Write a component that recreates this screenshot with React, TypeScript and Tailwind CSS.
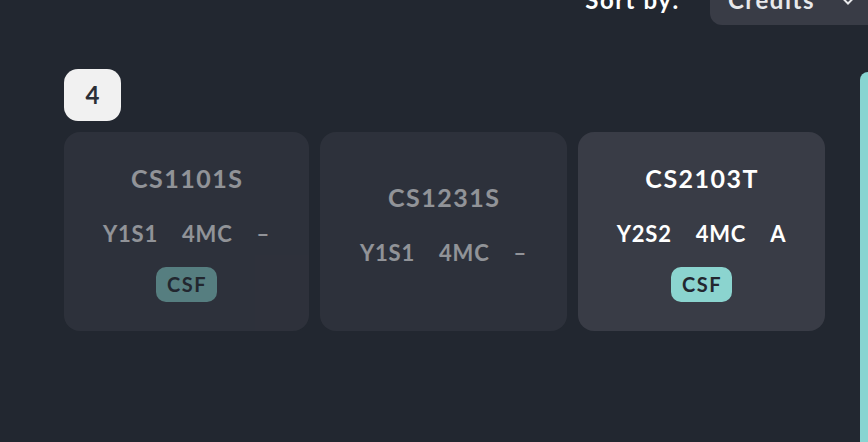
import React from 'react';

type Course = {
    code: string;
    sem: string;
    mc: string;
    grade: string;
    tag?: string;
    active?: boolean;
};

const COURSES: Course[] = [
    { code: 'CS1101S', sem: 'Y1S1', mc: '4MC', grade: '–', tag: 'CSF' },
    { code: 'CS1231S', sem: 'Y1S1', mc: '4MC', grade: '–' },
    { code: 'CS2103T', sem: 'Y2S2', mc: '4MC', grade: 'A', tag: 'CSF', active: true },
];

function CourseCard({ course, width }: { course: Course; width: string }) {
    return (
        <div
            className={`flex h-[199px] ${width} flex-col items-center justify-center rounded-[16px] bg-[#393c46] ${
                course.active ? '' : 'opacity-50'
            } ${course.tag ? '' : 'pb-[15px]'}`}
        >
            <div className="pl-[1.5px] text-[25px] font-bold leading-[32px] tracking-[1.5px] text-white">
                {course.code}
            </div>
            <div className="mt-[26px] flex gap-[24px] text-[22px] font-bold leading-[28px] tracking-[0.8px] text-white">
                <span>{course.sem}</span>
                <span>{course.mc}</span>
                <span>{course.grade}</span>
            </div>
            {course.tag && (
                <span className="mt-[19px] flex h-[35px] items-center rounded-[10px] bg-[#8bd4cf] pl-[11px] pr-[10px] text-[20px] font-bold tracking-[1.5px] text-[#22272f]">
                    {course.tag}
                </span>
            )}
        </div>
    );
}

export default function App() {
    return (
        <div
            className="flex h-[442px] w-[868px] flex-col overflow-hidden bg-[#222730]"
            style={{ fontFamily: 'Lato, "Liberation Sans", sans-serif' }}
        >
            <div className="-mt-[25px] flex h-[50px] items-center justify-end gap-[30px]">
                <span className="text-[24px] font-bold tracking-[1.5px] text-white">Sort by:</span>
                <div className="-mr-[12px] flex h-[50px] w-[170px] items-center rounded-[12px] bg-[#393c46] pl-[18px]">
                    <span className="text-[24px] font-bold tracking-[1.5px] text-[#e8e9eb]">Credits</span>
                    <svg width="12" height="8" viewBox="0 0 12 8" className="ml-[27px] mt-[2px]">
                        <path d="M1 1.5l5 5 5-5" fill="none" stroke="#e8e9eb" strokeWidth="2" strokeLinecap="round" />
                    </svg>
                </div>
            </div>
            <div className="flex flex-1">
                <div className="flex-1 pl-[64px] pt-[44px]">
                    <div className="flex h-[52px] w-[57px] items-center justify-center rounded-[14px] bg-[#f1f1f1] text-[24px] font-bold text-[#2a2e36]">
                        4
                    </div>
                    <div className="mt-[11px] flex gap-[11px]">
                        <CourseCard course={COURSES[0]} width="w-[245px]" />
                        <CourseCard course={COURSES[1]} width="w-[247px]" />
                        <CourseCard course={COURSES[2]} width="w-[247px]" />
                    </div>
                </div>
                <div className="mt-[47px] w-[8px] rounded-tl-[8px] bg-[#88d4d1]" />
            </div>
        </div>
    );
}
